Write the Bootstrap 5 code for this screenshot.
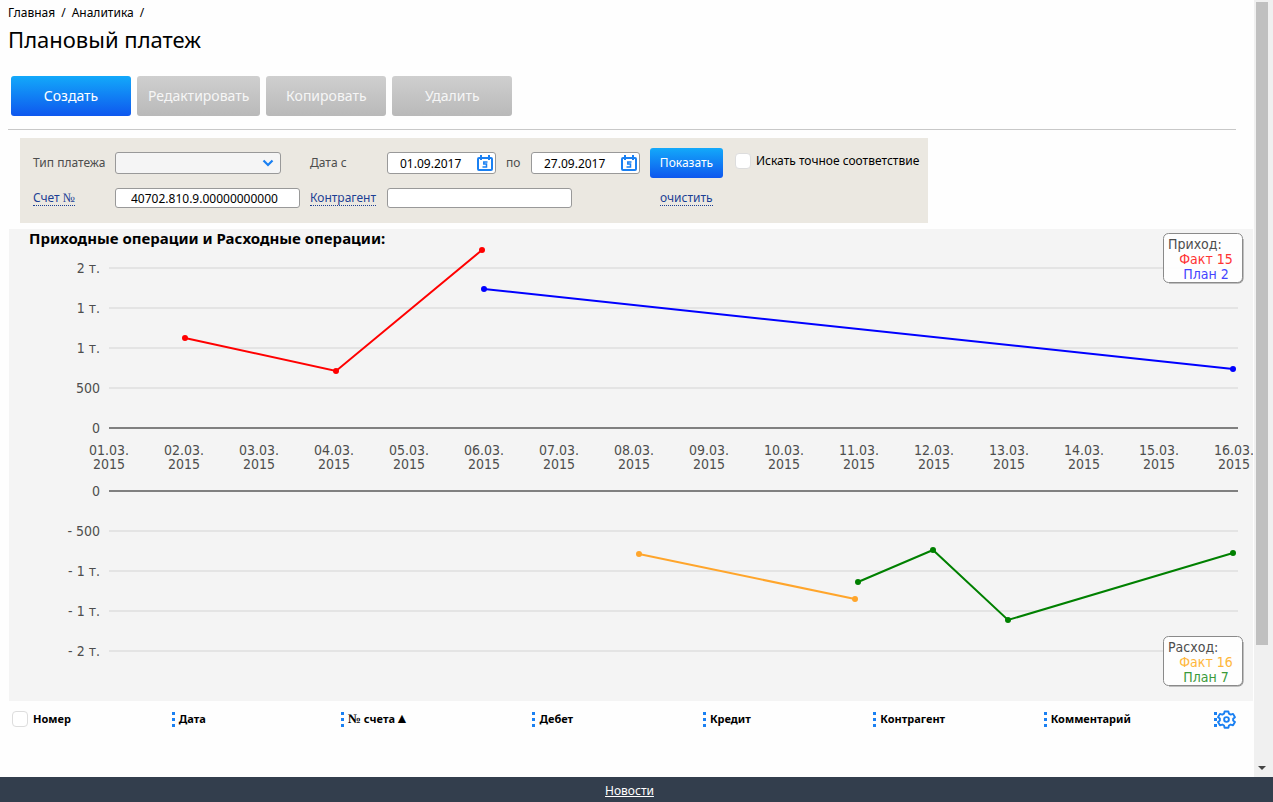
<!DOCTYPE html>
<html lang="ru">
<head>
<meta charset="utf-8">
<meta name="viewport" content="width=device-width, initial-scale=1">
<title>Плановый платеж</title>
<link rel="stylesheet" href="https://cdn.jsdelivr.net/npm/bootstrap@5.3.0/dist/css/bootstrap.min.css">
<style>
body{font:12px/16px "Noto Sans","Open Sans",sans-serif;color:#000;background:#fefefe}
.crumbs{--bs-breadcrumb-font-size:12px;--bs-breadcrumb-item-padding-x:6px;--bs-breadcrumb-divider-color:#000;height:16px}
.crumbs a{color:#000;text-decoration:none}
header{padding:5px 8px 8px}
.page-title{font-size:22px;line-height:28px;font-weight:400}
.actions{gap:6px;padding:23px 0 13px 3px}
.act{min-width:120px;height:40px;padding:0 11px;border:0;border-radius:3px;font-size:14px;line-height:20px;color:#fff}
.grad-blue,.grad-blue:hover{color:#fff;background:linear-gradient(#13a9fa,#0e57ee)}
.act:disabled{color:#f6f6f6;background:linear-gradient(#cfcfcf,#b9b9b9);opacity:1}
.rule{border-bottom:1px solid #c8c8c8;margin-right:10px}
.filter{width:908px;max-width:100%;margin-left:20px;background:#ebe8e1;color:#4d4d4d;display:grid;grid-template-columns:82px 195px 77px 263px 85px 1fr;grid-template-rows:30px 20px;row-gap:10px;align-items:center;padding:10px 0 15px 13px}
.filter input[type=text],.filter select{border:1px solid #999;border-radius:3px;background-color:#fff;color:#000;font-size:12px;line-height:16px;padding:0 0 0 15px;height:20px;width:185px}
.filter select{width:166px;height:22px;background-color:#f5f5f5;background-image:url("data:image/svg+xml,%3Csvg xmlns='http://www.w3.org/2000/svg' viewBox='0 0 12 8'%3E%3Cpath d='M1.5 1.5 6 6l4.500-4.500' fill='none' stroke='%231a80f2' stroke-width='2.200'/%3E%3C/svg%3E");background-size:12px 8px;background-position:right 6px center}
.filter .date{position:relative;width:109px;height:22px}
.filter .date input{width:109px;height:22px;padding-left:12px}
.filter .date button{position:absolute;right:2px;top:2px;width:18px;height:18px;padding:0;border:0;background:none;line-height:0}
.until{width:35px;padding-left:10px}
.dotted-link{color:#1c3f94;text-decoration:none;border-bottom:1px dotted #1c3f94;line-height:14px;justify-self:start}
.clear{margin-left:10px}
.show-btn{width:73px;height:30px;padding:0;border:0;border-radius:3px;font-size:12px;line-height:16px}
.exact{gap:5px;padding-bottom:5px}
.tick{width:16px;height:16px;flex:none;border:1px solid #ddd!important;border-radius:4px!important;margin:0!important;background-color:#fff}
.numero{font-family:"Liberation Serif",serif;font-size:13px}
.chart,.list{margin:0 1px 0 9px}
.chart{background:#f4f4f4;margin-top:6px}
.chart svg{display:block;width:100%;height:auto;font-family:"DejaVu Sans Condensed","DejaVu Sans",sans-serif;font-size:14px;fill:#4d4d4d}
.chart .caption-text{font-family:"Noto Sans",sans-serif;font-size:15px;font-weight:700;fill:#000}
.heads{table-layout:fixed;width:100%}
.heads th{font-weight:700;font-size:11px;white-space:nowrap;padding:0;height:36px}
.heads .w1{width:13%}.heads .w2{width:13.6%}.heads .w3{width:15.4%}.heads .w4{width:13.7%}
.first{padding-left:3px;gap:5px}
.sort{font-size:14px;line-height:12px}
.drag{width:3px;height:15px;margin:0 4px 0 1px;flex:none;background:radial-gradient(circle at 50% 1.5px,#1a80f2 1.5px,transparent 2px) 0 0/3px 6px}
.sbar{width:19px;background:#f0f0f0;padding:2px 5px 0 2px}
.sbar .thumb{background:#c0c0c0;flex:0 0 83%}
.foot{background:#333e4d;height:25px;padding:3px 14px 0 0}
.foot a{color:#fff}
</style>
</head>
<body>
<div class="d-flex flex-column vh-100">
 <div class="d-flex flex-grow-1 overflow-hidden">
  <main class="flex-grow-1 overflow-hidden">
   <header>
    <nav aria-label="Навигация"><ol class="breadcrumb crumbs mb-1">
     <li class="breadcrumb-item"><a href="#">Главная</a></li><li class="breadcrumb-item"><a href="#">Аналитика</a></li><li class="breadcrumb-item"></li>
    </ol></nav>
    <h1 class="page-title m-0">Плановый платеж</h1>
    <div class="actions d-flex rule">
     <button class="btn act grad-blue" type="button">Создать</button>
     <button class="btn act" type="button" disabled>Редактировать</button>
     <button class="btn act" type="button" disabled>Копировать</button>
     <button class="btn act" type="button" disabled>Удалить</button>
    </div>
   </header>
   <form class="filter">
    <label for="kind">Тип платежа</label>
    <select class="form-select" id="kind"><option></option></select>
    <label for="from">Дата с</label>
    <div class="d-flex align-items-center">
     <div class="date"><input type="text" id="from" value="01.09.2017"><button type="button" aria-label="Календарь"><svg width="18" height="18" viewBox="0 0 18 18" fill="none" stroke="#1a80f2" stroke-width="2"><rect x="2" y="4" width="14" height="12" rx="1"/><path d="M5 1v5M13 1v5"/><path d="M11.500 8H7.800v2h2.700v3H6.500" stroke-width="1.500"/></svg></button></div>
     <label for="to" class="until">по</label>
     <div class="date"><input type="text" id="to" value="27.09.2017"><button type="button" aria-label="Календарь"><svg width="18" height="18" viewBox="0 0 18 18" fill="none" stroke="#1a80f2" stroke-width="2"><rect x="2" y="4" width="14" height="12" rx="1"/><path d="M5 1v5M13 1v5"/><path d="M11.500 8H7.800v2h2.700v3H6.500" stroke-width="1.500"/></svg></button></div>
    </div>
    <button class="btn grad-blue show-btn" type="button">Показать</button>
    <div class="exact d-flex align-items-center"><input class="form-check-input tick" type="checkbox" id="exact"><label for="exact" class="text-black text-nowrap">Искать точное соответствие</label></div>
    <a href="#" class="dotted-link">Счет <span class="numero">№</span></a>
    <input type="text" value="40702.810.9.00000000000" aria-label="Счет №">
    <a href="#" class="dotted-link">Контрагент</a>
    <input type="text" aria-label="Контрагент">
    <a href="#" class="dotted-link clear">очистить</a>
   </form>
   <section class="chart">
    <svg id="plot" viewBox="0 0 1244 472" role="img" aria-label="Приходные и расходные операции"></svg>
   </section>
   <div class="list">
    <table class="heads">
     <colgroup><col class="w1"><col class="w2"><col class="w3"><col class="w4"><col class="w4"><col class="w4"><col class="w4"><col></colgroup>
     <thead><tr>
      <th><div class="d-flex align-items-center first"><input class="form-check-input tick" type="checkbox" id="all"><label for="all">Номер</label></div></th>
      <th><div class="d-flex align-items-center"><i class="drag"></i>Дата</div></th>
      <th><div class="d-flex align-items-center"><i class="drag"></i><span><span class="numero">№</span> счета<span class="sort">▲</span></span></div></th>
      <th><div class="d-flex align-items-center"><i class="drag"></i>Дебет</div></th>
      <th><div class="d-flex align-items-center"><i class="drag"></i>Кредит</div></th>
      <th><div class="d-flex align-items-center"><i class="drag"></i>Контрагент</div></th>
      <th><div class="d-flex align-items-center"><i class="drag"></i>Комментарий</div></th>
      <th><div class="d-flex align-items-center"><i class="drag me-0"></i><button type="button" class="btn p-0 border-0 lh-1" aria-label="Настройки"><svg width="19" height="19" viewBox="0 0 20 20" fill="none" stroke="#1a80f2" stroke-width="2" stroke-linejoin="round"><circle cx="10" cy="10" r="2.500"/><path d="M8 1.500h4l.6 2.400 1.800 1 2.500-.8 2 3.500-1.900 1.600v1.800l1.900 1.600-2 3.500-2.500-.8-1.800 1-.6 2.400H8l-.6-2.400-1.800-1-2.500.8-2-3.500L3 11V9L1.100 7.600l2-3.500 2.500.8 1.800-1z"/></svg></button></div></th>
     </tr></thead>
    </table>
   </div>
  </main>
  <div class="sbar d-flex flex-column justify-content-between flex-shrink-0" aria-hidden="true">
   <div class="thumb"></div>
   <svg width="12" height="18" viewBox="0 0 12 18"><path d="M2 7h8l-4 4z" fill="#444"/></svg>
  </div>
 </div>
 <footer class="foot d-flex align-items-center justify-content-center"><a href="#">Новости</a></footer>
</div>
<script>
const plot = document.getElementById('plot');
let out = '<text class="caption-text" x="20" y="15">Приходные операции и Расходные операции:</text>';
[[39,'2 т.'],[79,'1 т.'],[119,'1 т.'],[159,'500'],[199,'0'],[262,'0'],[302,'- 500'],[342,'- 1 т.'],[382,'- 1 т.'],[422,'- 2 т.']].forEach(([y,t]) => {
  out += `<path d="M100 ${y}H1229" stroke="${t === '0' ? '#808080' : '#e4e4e4'}" stroke-width="2"/><text x="91" y="${y + 5}" text-anchor="end">${t}</text>`;
});
for (let i = 0; i < 16; i++) {
  const x = 100 + i * 75;
  out += `<text y="226" text-anchor="middle"><tspan x="${x}">${String(i + 1).padStart(2, '0')}.03.</tspan><tspan x="${x}" dy="14">2015</tspan></text>`;
}
[['#f00',[[176,109],[327,142],[473,21]]],['#00f',[[475,60],[1224,140]]],['#ffa52b',[[630,325],[846,370]]],['#008000',[[849,353],[924,321],[999,391],[1224,324]]]].forEach(([c,p]) => {
  out += `<polyline points="${p.join(' ')}" fill="none" stroke="${c}" stroke-width="2"/>` + p.map(q => `<circle cx="${q[0]}" cy="${q[1]}" r="3" fill="${c}"/>`).join('');
});
[[4,'Приход:','Факт 15','#f33','План 2','#44f'],[407,'Расход:','Факт 16','#ffb73b','План 7','#3a9a3a']].forEach(([y,h,a,ac,b,bc]) => {
  out += `<g><rect x="1154.5" y="${y + .5}" width="79" height="49" rx="5" fill="#fff" fill-opacity=".9" stroke="#8a8a8a"/><path d="M1160 ${y + 50}h69q5 0 5-5V${y + 6}" fill="none" stroke="#8a8a8a"/><text x="1159" y="${y + 16}">${h}</text><text x="1197" y="${y + 31}" text-anchor="middle" fill="${ac}">${a}</text><text x="1197" y="${y + 46}" text-anchor="middle" fill="${bc}">${b}</text></g>`;
});
plot.innerHTML = out;
</script>
<script src="https://cdn.jsdelivr.net/npm/bootstrap@5.3.0/dist/js/bootstrap.bundle.min.js"></script>
</body>
</html>
